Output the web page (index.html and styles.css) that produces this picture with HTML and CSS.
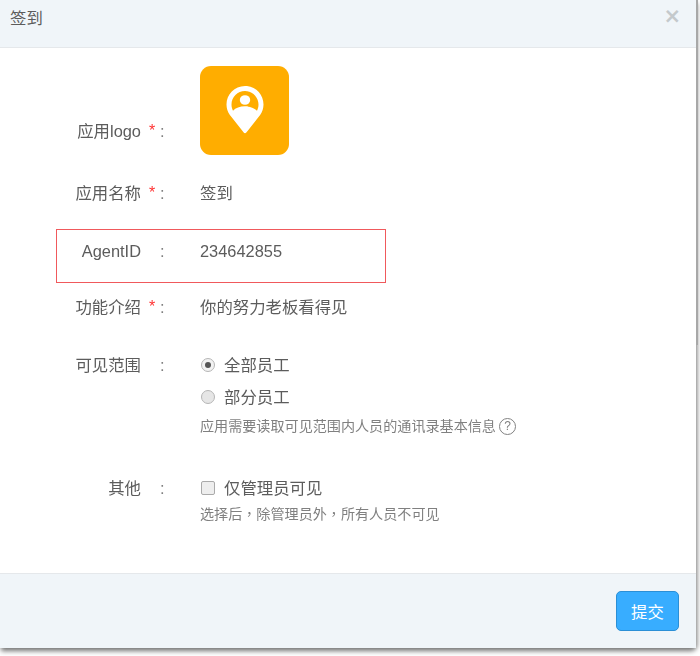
FILE: index.html
```html
<!DOCTYPE html>
<html>
<head>
	<meta charset="utf-8">
	<meta name="viewport" content="width=device-width, initial-scale=1">
	<title>签到</title>
	<link rel="stylesheet" href="styles.css">
</head>

<body>
	<div class="modal">
		<div class="modal-head">
			<span class="modal-title">签到</span>
			<span class="close">×</span>
		</div>

		<div class="modal-body">
			<div class="row row-logo">
				<div class="label">应用logo<i class="star">*</i><b class="colon">:</b></div>
				<div class="logo">
					<svg width="40" height="50" viewBox="0 0 40 50">
						<path fill="#fff" fill-rule="evenodd" d="M20 1C9.500 1 1.500 9.300 1.500 19.500c0 3.800 1.200 7.300 3.200 10.200L18.700 47.600c.7.800 1.900.8 2.600 0L35.300 29.700c2-2.900 3.200-6.400 3.200-10.200C38.500 9.300 30.500 1 20 1zM20 6c7.500 0 13.500 6 13.500 13.500 0 2.300-.6 4.400-1.500 6.200C29.500 23 25 21.300 20 21.300S10.500 23 8 25.700c-.9-1.800-1.500-3.900-1.500-6.200C6.500 12 12.500 6 20 6z"/>
						<ellipse fill="#fff" cx="20" cy="15" rx="5.200" ry="4.800"/>
					</svg>
				</div>
			</div>

			<div class="row row-name">
				<div class="label">应用名称<i class="star">*</i><b class="colon">:</b></div>
				<div class="value">签到</div>
			</div>

			<div class="row row-agent">
				<div class="label">AgentID<i class="star"></i><b class="colon">:</b></div>
				<div class="value">234642855</div>
				<div class="redbox"></div>
			</div>

			<div class="row row-intro">
				<div class="label">功能介绍<i class="star">*</i><b class="colon">:</b></div>
				<div class="value">你的努力老板看得见</div>
			</div>

			<div class="row row-scope">
				<div class="label">可见范围<i class="star"></i><b class="colon">:</b></div>
				<div class="value">
					<div class="option"><span class="radio radio-on"></span>全部员工</div>
					<div class="option"><span class="radio"></span>部分员工</div>
					<div class="hint">应用需要读取可见范围内人员的通讯录基本信息<span class="help">?</span></div>
				</div>
			</div>

			<div class="row row-other">
				<div class="label">其他<i class="star"></i><b class="colon">:</b></div>
				<div class="value">
					<div class="option"><span class="check"></span>仅管理员可见</div>
					<div class="hint hint-other">选择后，除管理员外，所有人员不可见</div>
				</div>
			</div>
		</div>

		<div class="modal-foot">
			<button class="submit">提交</button>
		</div>
	</div>
	<div class="edge"></div>
</body>
</html>
```

FILE: styles.css
```css
body {
	margin: 0;
	height: 656px;
	overflow: hidden;
	background: #fff;
	font-family: "Liberation Sans", "Noto Sans CJK SC", sans-serif;
	color: #5c5c5c;
}

.modal {
	width: 696px;
	height: 648px;
	display: flex;
	flex-direction: column;
	background: #fff;
	border-radius: 0 0 6px 0;
	box-shadow: 1px 3px 5px rgba(0, 0, 0, 0.55);
	filter: blur(0.35px);
}

.modal-head {
	height: 48px;
	box-sizing: border-box;
	flex: none;
	display: flex;
	justify-content: space-between;
	padding: 8px 15px 0 10px;
	background: #f0f5f9;
	border-bottom: 1px solid #e5e8eb;
}
.modal-title {
	font-size: 16.4px;
	line-height: 20px;
}
.close {
	font-family: "DejaVu Sans", sans-serif;
	font-size: 21px;
	font-weight: bold;
	line-height: 16px;
	color: #c4c9cc;
}

.modal-body {
	flex: 1;
	padding-top: 18px;
}

.row {
	position: relative;
	display: flex;
	align-items: flex-start;
	font-size: 16.4px;
	line-height: 22px;
}
.label {
	width: 200px;
	flex: none;
	display: flex;
	justify-content: flex-end;
	padding-right: 59px;
	box-sizing: border-box;
	position: relative;
}
.star {
	position: absolute;
	left: 149px;
	top: 0;
	font-style: normal;
	font-size: 16px;
	color: #f33;
}
.colon {
	position: absolute;
	left: 160px;
	top: 0;
	font-weight: normal;
	color: #808080;
}

.row-logo {
	align-items: flex-end;
}
.row-logo .label {
	top: -13px;
}
.logo {
	width: 89px;
	height: 89px;
	background: #ffad00;
	border-radius: 11px;
	display: flex;
	align-items: center;
	justify-content: center;
	padding-bottom: 2px;
	box-sizing: border-box;
}

.row-name {
	margin-top: 27px;
}
.row-agent {
	margin-top: 36px;
}
.redbox {
	position: absolute;
	left: 56px;
	top: -11px;
	width: 330px;
	height: 54px;
	box-sizing: border-box;
	border: 1.5px solid #f0595c;
}
.row-intro {
	margin-top: 34px;
}
.row-scope {
	margin-top: 36px;
}
.row-other {
	margin-top: 41px;
}

.option {
	display: flex;
	align-items: center;
	height: 22px;
	margin-bottom: 10px;
}
.radio,
.check {
	width: 14px;
	height: 14px;
	margin: 0 9px 0 1px;
	box-sizing: border-box;
	border: 1px solid #b5b5b5;
	background: #e6e6e6;
}
.radio {
	border-radius: 50%;
	position: relative;
}
.radio-on {
	background: #f2f2f2;
}
.radio-on::after {
	content: "";
	position: absolute;
	left: 3px;
	top: 3px;
	width: 6px;
	height: 6px;
	border-radius: 50%;
	background: #555;
}
.check {
	border-color: #aaa;
	border-radius: 2px;
	background: #eee;
}
.hint {
	display: flex;
	align-items: center;
	font-size: 14.1px;
	line-height: 20px;
	color: #808080;
	margin-top: -2px;
}
.hint-other {
	margin-top: -5px;
	font-family: "Liberation Sans", "Noto Sans CJK TC", sans-serif;
}
.help {
	width: 15px;
	height: 15px;
	margin-left: 3px;
	border: 1px solid #808080;
	border-radius: 50%;
	font-size: 12px;
	line-height: 15px;
	text-align: center;
}

.modal-foot {
	height: 75px;
	box-sizing: border-box;
	flex: none;
	display: flex;
	justify-content: flex-end;
	align-items: flex-start;
	padding: 17px 17px 0 0;
	background: #f0f5f9;
	border-top: 1px solid #e5e8eb;
}
.submit {
	width: 63px;
	height: 40px;
	padding: 0;
	border: 1px solid #2b8fd6;
	border-radius: 5px;
	background: #38adff;
	color: #fff;
	font-family: inherit;
	font-size: 16.4px;
}

/* scrollbar strip left over at the right side of the shot */
.edge {
	position: absolute;
	left: 696px;
	top: 0;
	width: 2px;
	height: 345px;
	background: #a8a8a8;
}
```
